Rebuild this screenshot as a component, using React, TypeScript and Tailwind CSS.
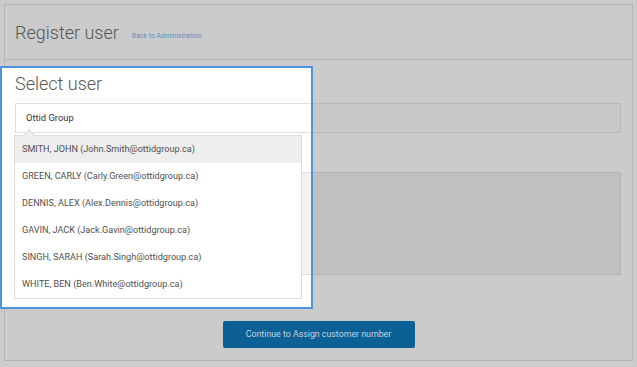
const users = [
  { name: "SMITH, JOHN", email: "John.Smith@ottidgroup.ca" },
  { name: "GREEN, CARLY", email: "Carly.Green@ottidgroup.ca" },
  { name: "DENNIS, ALEX", email: "Alex.Dennis@ottidgroup.ca" },
  { name: "GAVIN, JACK", email: "Jack.Gavin@ottidgroup.ca" },
  { name: "SINGH, SARAH", email: "Sarah.Singh@ottidgroup.ca" },
  { name: "WHITE, BEN", email: "Ben.White@ottidgroup.ca" },
];

function UserDropdown() {
  return (
    <div className="absolute left-[12px] top-[67px] w-[288px] border border-[#dcdcdc] bg-white">
      <div className="absolute -top-[5px] left-[10px] h-[8px] w-[8px] rotate-45 border-l border-t border-[#dcdcdc] bg-[#eeeeee]" />
      {users.map((u, i) => (
        <div
          key={u.email}
          className={`relative flex h-[27px] items-center pl-[7px] text-[9.1px] text-[#505050] ${i === 0 ? "bg-[#eeeeee]" : ""}`}
        >
          {u.name} ({u.email})
        </div>
      ))}
    </div>
  );
}

export default function App() {
  return (
    <div className="relative h-[367px] w-[637px] overflow-hidden bg-[#cbcbcb] pl-[4px] pt-[4px] font-['Roboto',sans-serif]">
      <div className="flex h-[357px] w-[629px] flex-col border border-[#b6b6b6]">
        <div className="flex h-[55px] items-end gap-[13px] border-b border-[#b6b6b6] pb-[17px] pl-[10px]">
          <h1 className="text-[18px] font-light leading-none text-[#555]">Register user</h1>
          <a className="pb-[1px] text-[6.9px] text-[#5c8fc0]">Back to Administration</a>
        </div>
        <div className="flex flex-1 flex-col px-[10px]">
          <div className="h-[43px]" />
          <div className="h-[30px] w-[606px] border border-[#b9b9b9] bg-[#c8c8c8]" />
          <div className="h-[39px]" />
          <div className="h-[103px] w-[606px] border border-[#b3b3b3] bg-[#c2c0be]" />
          <div className="flex flex-1 items-end justify-center pb-[12px]">
            <button className="h-[27px] w-[192px] rounded-[2px] bg-[#0b6096] text-[8.8px] text-[#c6d3de]">
              Continue to Assign customer number
            </button>
          </div>
        </div>
      </div>

      {/* tour spotlight over the select field */}
      <div className="absolute left-0 top-[66px] h-[243px] w-[313px] overflow-hidden border-2 border-[#4d94e0] bg-white">
        <div className="pl-[13px]">
          <div className="flex h-[34px] items-center pb-[4px] text-[18px] font-light text-[#555]">Select user</div>
          <div className="h-[1px]" />
          <div className="flex h-[30px] w-[606px] items-center border border-[#dddddd] pl-[10px] text-[9.4px] text-[#333]">
            Ottid Group
          </div>
          <div className="h-[39px]" />
          <div className="h-[103px] w-[606px] border border-[#dddddd] bg-[#f3f2f0]" />
        </div>
        <UserDropdown />
      </div>
    </div>
  );
}
